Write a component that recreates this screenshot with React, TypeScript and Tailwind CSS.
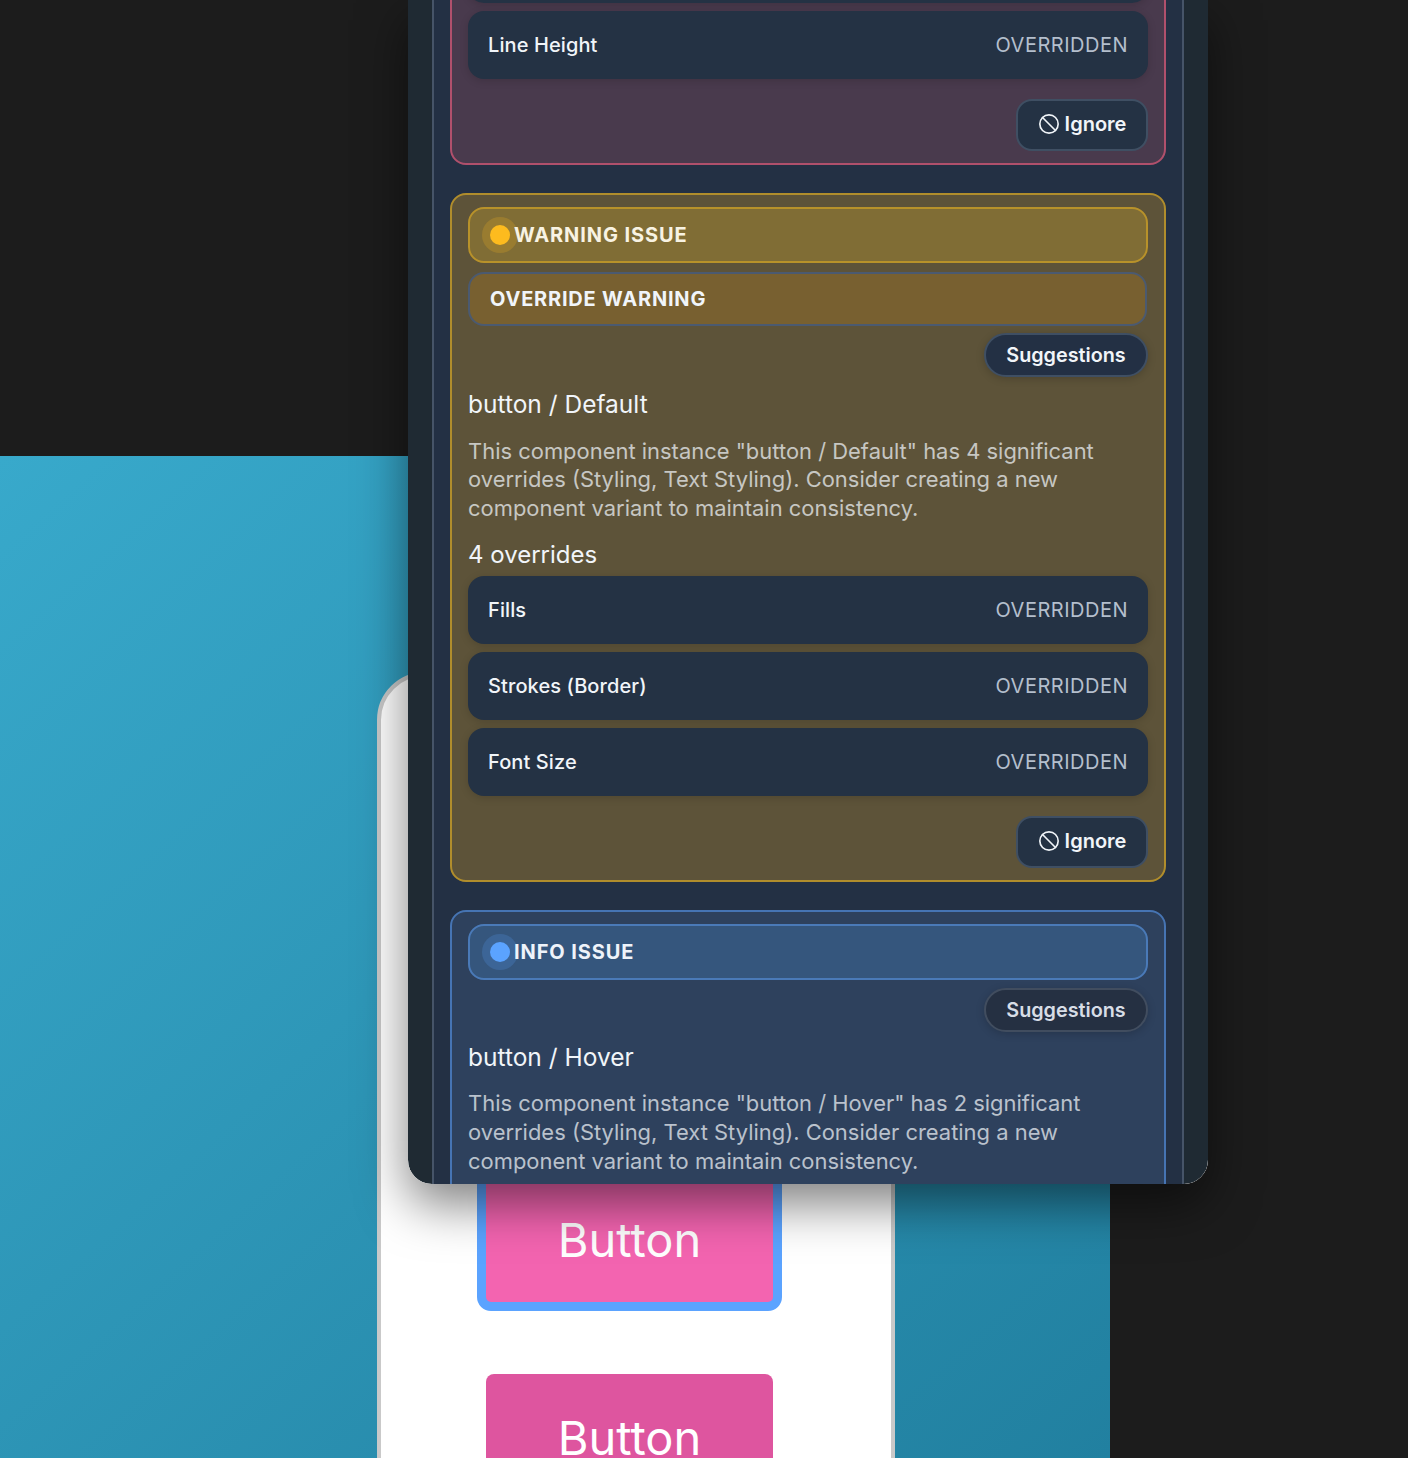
import { Ban } from "lucide-react";

const font = { fontFamily: "Inter, 'Liberation Sans', sans-serif" };

function OverrideRow({ label }: { label: string }) {
  return (
    <div className="flex h-[68px] items-center justify-between rounded-2xl bg-[#243244] pl-5 pr-5 shadow-[0_2px_8px_rgba(0,0,0,0.15)]">
      <span className="text-[20px] font-[550] tracking-[0.1px] text-[#f1f5f9]">{label}</span>
      <span className="text-[20px] tracking-[0.5px] text-[#b4bfcd]">OVERRIDDEN</span>
    </div>
  );
}

function IgnoreButton() {
  return (
    <div className="mt-5 flex justify-end">
      <div className="flex h-[52px] w-[132px] items-center justify-center gap-[5px] rounded-2xl border-2 border-[#3f4f63] bg-[#243244] pb-0.5 text-[20px] font-semibold text-[#f1f5f9]">
        <Ban size={22} strokeWidth={1.8} />
        <span>Ignore</span>
      </div>
    </div>
  );
}

function Description({ title, tight, children }: { title: string; tight?: boolean; children: React.ReactNode }) {
  return (
    <>
      <div className={tight ? "mt-[9px] h-8 text-[24.5px] leading-8 text-[#f1f5f9]" : "mt-[11px] h-8 text-[24.5px] leading-8 text-[#f1f5f9]"}>
        {title}
      </div>
      <p className="mt-[16.7px] w-[660px] text-[21.95px] leading-[28.6px] text-[#f1f5f9]/72">{children}</p>
    </>
  );
}

function WarningCard() {
  return (
    <section className="mt-7 rounded-2xl border-2 border-[#b08d2c] bg-[#5d5339] px-4 pb-3 pt-3">
      <header className="flex h-14 items-center gap-1 rounded-2xl border-2 border-[#b8922a] bg-[#806d35] pl-5">
        <span className="size-5 rounded-full bg-[#fdbb1e] shadow-[0_0_0_8px_rgba(253,187,30,0.2)]" />
        <span className="text-[20px] font-bold tracking-[0.9px] text-[#f8f3e3]">WARNING ISSUE</span>
      </header>
      <div className="mr-px mt-[9px] flex h-[54px] items-center rounded-2xl border-2 border-[#4b5a70] bg-[#786030] pl-5">
        <span className="text-[20px] font-bold tracking-[0.8px] text-[#f1f5f9]">OVERRIDE WARNING</span>
      </div>
      <div className="mt-[7px] flex justify-end">
        <div className="flex h-[44px] w-[164px] items-center justify-center rounded-[22px] border-2 border-[#3f4f63] bg-[#233044] pt-0.5 text-[19.8px] font-semibold text-[#f1f5f9] shadow-[0_2px_8px_rgba(0,0,0,0.18)]">
          Suggestions
        </div>
      </div>
      <Description title="button / Default">
        This component instance "button / Default" has 4 significant overrides (Styling, Text Styling). Consider creating a new component variant to maintain consistency.
      </Description>
      <div className="mt-[16.3px] h-8 text-[24px] leading-8 text-[#f1f5f9]">4 overrides</div>
      <div className="mt-[5px] flex flex-col gap-2">
        <OverrideRow label="Fills" />
        <OverrideRow label="Strokes (Border)" />
        <OverrideRow label="Font Size" />
      </div>
      <IgnoreButton />
    </section>
  );
}

function InfoCard() {
  return (
    <section className="mt-7 rounded-2xl border-2 border-[#4674b3] bg-[#2e415d] px-4 pb-12 pt-3">
      <header className="flex h-14 items-center gap-1 rounded-2xl border-2 border-[#4a7ab8] bg-[#35567d] pl-5">
        <span className="size-5 rounded-full bg-[#5ba3ff] shadow-[0_0_0_8px_rgba(91,163,255,0.2)]" />
        <span className="text-[20px] font-bold tracking-[0.9px] text-[#eef3fa]">INFO ISSUE</span>
      </header>
      <div className="mt-2 flex justify-end">
        <div className="flex h-[44px] w-[164px] items-center justify-center rounded-[22px] border-2 border-[#414d5f] bg-[#253042] pt-0.5 text-[19.8px] font-semibold text-[#d7dde6] shadow-[0_2px_8px_rgba(0,0,0,0.18)]">
          Suggestions
        </div>
      </div>
      <Description title="button / Hover" tight>
        This component instance "button / Hover" has 2 significant overrides (Styling, Text Styling). Consider creating a new component variant to maintain consistency.
      </Description>
    </section>
  );
}

export default function App() {
  return (
    <div className="relative h-[1458px] w-[1408px] overflow-hidden bg-[#1c1c1c] pt-[456px]" style={font}>
      {/* canvas behind the panel */}
      <div className="h-[1002px] w-[1110px] bg-linear-to-br from-[#38a9cb] to-[#2180a0] pl-[377px] pt-[216px]">
        <div className="h-[900px] w-[518px] rounded-t-[48px] border-4 border-[#c9c9c9] bg-white pl-[96px] pt-[493px]">
          <div className="flex h-[142px] w-[305px] items-center justify-center rounded-[14px] border-[9px] border-[#5ba3ff] bg-[#f364b0] text-[47px] text-white">
            Button
          </div>
          <div className="ml-[9px] mt-[63px] flex h-[128px] w-[287px] items-center justify-center rounded-lg bg-[#de559f] text-[47px] text-white">
            Button
          </div>
        </div>
      </div>

      {/* floating panel */}
      <div className="absolute left-[408px] top-0 h-[1184px] w-[800px] overflow-hidden rounded-b-3xl bg-white shadow-[0_20px_50px_rgba(0,0,0,0.5)]">
        <div className="h-full rounded-b-3xl bg-[#1f2a33] px-6">
          <div className="h-full overflow-hidden border-x-2 border-[#465468] bg-[#233044] px-4">
            <section className="-mt-[79px] rounded-2xl border-2 border-[#b0506c] bg-[#493a4d] px-4 pb-3 pt-3">
              <div className="flex flex-col gap-2">
                <OverrideRow label="Letter Spacing" />
                <OverrideRow label="Line Height" />
              </div>
              <IgnoreButton />
            </section>
            <WarningCard />
            <InfoCard />
          </div>
        </div>
      </div>
    </div>
  );
}
